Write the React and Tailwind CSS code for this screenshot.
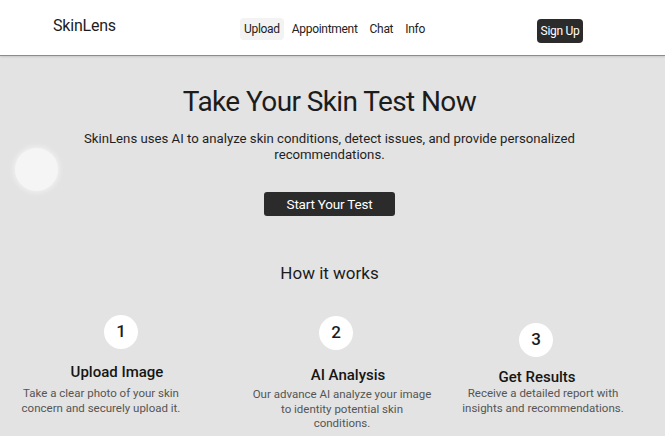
import React from 'react';

// Steps shown under "How it works"
const steps = [
  {
    n: '1',
    title: 'Upload Image',
    text: 'Take a clear photo of your skin concern and securely upload it.',
    col: 'ml-[11px] w-[180px] mt-0',
    circle: 'ml-[40px]',
    head: 'mt-[14px] ml-[32px]',
    desc: 'mt-[5px] w-[180px]',
  },
  {
    n: '2',
    title: 'AI Analysis',
    text: 'Our advance AI analyze your image to identity potential skin conditions.',
    col: 'ml-[56px] w-[190px] mt-[1px]',
    circle: 'mr-[12px]',
    head: 'mt-[16px] ml-[12px]',
    desc: 'mt-[3px] w-[180.5px]',
  },
  {
    n: '3',
    title: 'Get Results',
    text: 'Receive a detailed report with insights and recommendations.',
    col: 'ml-[21px] w-[170px] mt-[8px]',
    circle: 'mr-[14px]',
    head: 'mt-[11px] mr-[12px]',
    desc: 'mt-0 w-[170px]',
  },
];

const App = () => {
  return (
    <div className="relative min-h-[436px] overflow-hidden bg-[#e3e3e3] font-['Roboto','Liberation_Sans',sans-serif] text-[#1c1c1c]">
      {/* Header */}
      <header className="grid h-[56px] grid-cols-[1fr_auto_1fr] border-b border-[#8c8c8c] bg-white shadow-[0_1px_2px_rgba(0,0,0,0.12)]">
        <div className="justify-self-start pl-[53px] pt-[16px] text-[16px] leading-[20px] tracking-[-0.2px]">SkinLens</div>
        <nav className="flex items-start gap-1 pl-[4px] pt-[18px] text-[12px] leading-[22px] tracking-[-0.3px] text-[#222]">
          <a className="rounded-sm bg-[#f3f3f3] px-1">Upload</a>
          <a className="px-1">Appointment</a>
          <a className="px-1">Chat</a>
          <a className="px-1">Info</a>
        </nav>
        <div className="justify-self-end pr-[82px] pt-[18px]">
          <button className="h-[24px] w-[46px] rounded-[4px] bg-[#2b2b2b] text-[12px] leading-[24px] tracking-[-0.3px] text-white">
            Sign Up
          </button>
        </div>
      </header>

      {/* Decorative bubble */}
      <div className="absolute left-[15px] top-[148px] h-[43px] w-[43px] rounded-full bg-[#f5f5f5] shadow-[0_0_5px_2px_rgba(245,245,245,0.7)]" />

      {/* Hero */}
      <section className="flex flex-col items-center pr-[6px] pt-[30px]">
        <h1 className="text-[28px] leading-[32px] font-normal tracking-[-0.6px]">Take Your Skin Test Now</h1>
        <p className="mt-[13px] max-w-[505px] text-center text-[13.2px] leading-[16px] text-[#1f1f1f]">
          SkinLens uses AI to analyze skin conditions, detect issues, and provide personalized recommendations.
        </p>
        <button className="mt-[29px] h-[24px] w-[131px] rounded-[3px] bg-[#2b2b2b] text-[13.5px] leading-[24px] tracking-[-0.2px] text-white">
          Start Your Test
        </button>
        <h2 className="mt-[47px] text-[17px] leading-[20px] font-normal">How it works</h2>
      </section>

      {/* Steps */}
      <div className="mt-[32px] flex items-start">
        {steps.map((s) => (
          <div key={s.n} className={`flex flex-col items-center ${s.col}`}>
            <div className={`flex h-[34px] w-[34px] items-center justify-center rounded-full bg-white text-[17px] font-medium ${s.circle}`}>
              {s.n}
            </div>
            <h3 className={`text-[15px] leading-[18px] font-medium text-[#151515] ${s.head}`}>{s.title}</h3>
            <p className={`text-center text-[11.5px] leading-[14.5px] text-[#555] ${s.desc}`}>{s.text}</p>
          </div>
        ))}
      </div>
    </div>
  );
};

export default App;
